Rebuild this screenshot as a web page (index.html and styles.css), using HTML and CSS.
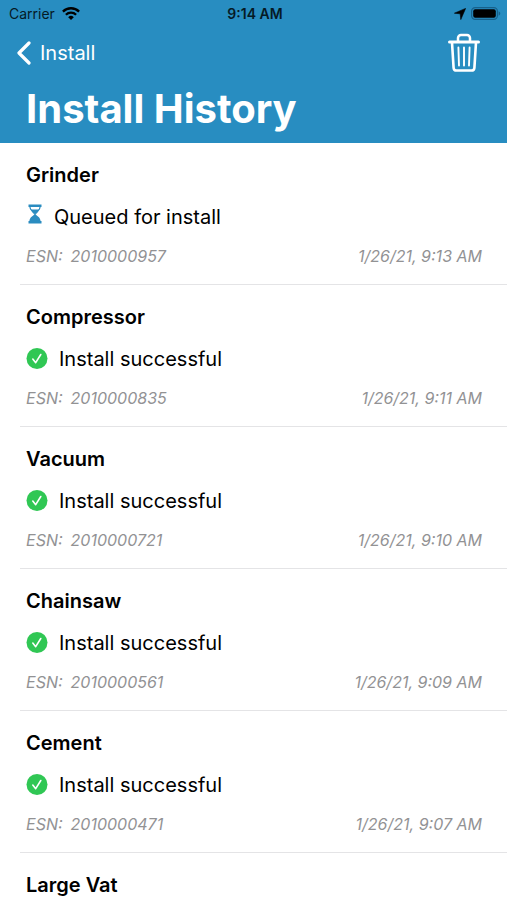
FILE: index.html
```html
<!DOCTYPE html>
<html lang="en">
<head>
<meta charset="utf-8">
<meta name="viewport" content="width=device-width, initial-scale=1">
<title>Install History</title>
<link rel="stylesheet" href="styles.css">
</head>
<body>
<svg class="defs" aria-hidden="true">
  <symbol id="check" viewBox="0 0 22 22">
    <circle cx="11" cy="10.500" r="10.500" fill="#30c754"/>
    <path d="M6.800 11.100l2.900 3.600 5.100-8.200" fill="none" stroke="#fff" stroke-width="1.600" stroke-linecap="round" stroke-linejoin="round"/>
  </symbol>
</svg>
<div class="app">
  <header class="header">
    <div class="status-bar">
      <div class="carrier">
        <span>Carrier</span>
        <svg class="wifi" viewBox="0 0 18 14" aria-hidden="true">
          <g fill="none" stroke="currentColor" stroke-width="2.300">
            <path d="M.9 4.600a11.500 11.500 0 0 1 16.200 0"/>
            <path d="M3.900 7.800a7.200 7.200 0 0 1 10.200 0"/>
          </g>
          <path d="M9 13.100L6.200 10.200a4 4 0 0 1 5.600 0z" fill="currentColor"/>
        </svg>
      </div>
      <span class="clock">9:14 AM</span>
      <div class="indicators">
        <svg class="location" viewBox="0 0 12 12" aria-hidden="true"><path d="M11.600.4L6.800 11.600 6.200 5.800.4 5.200z" fill="currentColor" stroke="currentColor" stroke-width=".6" stroke-linejoin="round"/></svg>
        <svg class="battery" viewBox="0 0 30 14" aria-hidden="true">
          <rect x=".6" y=".6" width="25.800" height="11.800" rx="3.600" fill="none" stroke="#17618b" stroke-width="1.200"/>
          <rect x="2.200" y="2.200" width="22.600" height="8.600" rx="2" fill="#000"/>
          <path d="M27.600 4.300c2.200.9 2.200 3.500 0 4.400z" fill="#17618b"/>
        </svg>
      </div>
    </div>
    <nav class="nav">
      <a class="back" href="#">
        <svg class="chevron" viewBox="0 0 16 24" aria-hidden="true"><path d="M13 2L3 12l10 10" fill="none" stroke="currentColor" stroke-width="3.200" stroke-linecap="round" stroke-linejoin="round"/></svg>
        <span>Install</span>
      </a>
      <button class="trash" type="button" aria-label="Clear history">
        <svg viewBox="0 0 34 40" aria-hidden="true">
          <g fill="none" stroke="currentColor" stroke-linecap="round" stroke-linejoin="round">
            <path d="M2.500 9h29" stroke-width="3"/>
            <path d="M11 8.500V5a3 3 0 0 1 3-3h6a3 3 0 0 1 3 3v3.500" stroke-width="2.500"/>
            <path d="M5 9.500l1.600 25.300a3 3 0 0 0 3 2.700h14.800a3 3 0 0 0 3-2.700L29 9.500" stroke-width="2.600"/>
            <path d="M11.400 14.500l.6 18M17 14.500v18M22.600 14.500l-.6 18" stroke-width="1.900"/>
          </g>
        </svg>
      </button>
    </nav>
    <h1 class="title">Install History</h1>
  </header>
  <main class="list">
    <article class="item">
      <h2 class="name">Grinder</h2>
      <p class="state queued">
        <svg class="hourglass" viewBox="0 0 14 20" aria-hidden="true">
          <g fill="#2a8cc0">
            <path d="M.5.500h13v2.500H.5zM.5 17h13v2.500H.5z"/>
            <path d="M2.500 5.500h9L7 9.800z"/>
            <path d="M7 9.500c1.500 2.400 5.600 3.500 5.600 8H1.400c0-4.500 4.100-5.600 5.600-8z"/>
          </g>
          <path d="M1.800 2.500C1.800 6.500 5.200 7.800 6.600 10M12.200 2.500c0 4-3.400 5.300-4.800 7.500" fill="none" stroke="#2a8cc0" stroke-width="1.200"/>
        </svg>
        <span>Queued for install</span>
      </p>
      <div class="meta"><span class="esn"><span>ESN:</span><span>2010000957</span></span><time>1/26/21, 9:13 AM</time></div>
    </article>
    <article class="item">
      <h2 class="name">Compressor</h2>
      <p class="state"><svg class="check" aria-hidden="true"><use href="#check"/></svg><span>Install successful</span></p>
      <div class="meta"><span class="esn"><span>ESN:</span><span>2010000835</span></span><time>1/26/21, 9:11 AM</time></div>
    </article>
    <article class="item">
      <h2 class="name">Vacuum</h2>
      <p class="state"><svg class="check" aria-hidden="true"><use href="#check"/></svg><span>Install successful</span></p>
      <div class="meta"><span class="esn"><span>ESN:</span><span>2010000721</span></span><time>1/26/21, 9:10 AM</time></div>
    </article>
    <article class="item">
      <h2 class="name">Chainsaw</h2>
      <p class="state"><svg class="check" aria-hidden="true"><use href="#check"/></svg><span>Install successful</span></p>
      <div class="meta"><span class="esn"><span>ESN:</span><span>2010000561</span></span><time>1/26/21, 9:09 AM</time></div>
    </article>
    <article class="item">
      <h2 class="name">Cement</h2>
      <p class="state"><svg class="check" aria-hidden="true"><use href="#check"/></svg><span>Install successful</span></p>
      <div class="meta"><span class="esn"><span>ESN:</span><span>2010000471</span></span><time>1/26/21, 9:07 AM</time></div>
    </article>
    <article class="item">
      <h2 class="name">Large Vat</h2>
    </article>
  </main>
</div>
</body>
</html>
```
FILE: styles.css
```css
* { box-sizing: border-box; }

body {
  margin: 0;
  background: #fff;
  color: #000;
  font-family: Inter, "Liberation Sans", sans-serif;
}

h1, h2, p { margin: 0; }

.defs { display: none; }

.app {
  display: flex;
  flex-direction: column;
  height: 100vh;
  overflow: hidden;
}

.header {
  flex: none;
  background: #288dc1;
  padding-bottom: 4px;
}

.status-bar {
  display: grid;
  grid-template-columns: 1fr auto 1fr;
  align-items: center;
  height: 27px;
  padding: 0 6px 0 9px;
  font-size: 14px;
  color: #051a26;
}

.carrier {
  display: flex;
  align-items: center;
  gap: 7px;
}

.wifi { width: 18px; height: 14px; color: #000; }

.clock { font-weight: 600; }

.indicators {
  display: flex;
  justify-content: flex-end;
  align-items: center;
  gap: 5px;
  color: #000;
}

.location { width: 12px; height: 12px; }
.battery { width: 30px; height: 14px; }

.nav {
  display: flex;
  justify-content: space-between;
  align-items: center;
  height: 52px;
  padding: 0 26px 0 16px;
}

.back {
  display: flex;
  align-items: center;
  gap: 8px;
  color: #fff;
  font-size: 20px;
  text-decoration: none;
}

.chevron { width: 16px; height: 24px; }

.trash {
  display: block;
  width: 34px;
  height: 40px;
  padding: 0;
  border: 0;
  background: none;
  color: #fff;
}

.trash svg { display: block; width: 100%; height: 100%; }

.title {
  padding-left: 26px;
  color: #fff;
  font-size: 40px;
  line-height: 60px;
  font-weight: 700;
}

.list {
  flex: 1;
  min-height: 0;
  overflow: hidden;
  padding-left: 20px;
}

.item {
  padding: 20px 25px 18px 6px;
  border-bottom: 1px solid #e4e4e6;
}

.name {
  font-size: 20px;
  line-height: 24px;
  font-weight: 600;
}

.state {
  display: flex;
  align-items: center;
  gap: 11px;
  margin-top: 16px;
  font-size: 20px;
  line-height: 28px;
}

.check { width: 22px; height: 22px; }
.hourglass { width: 14px; height: 20px; }

.queued {
  align-items: baseline;
  gap: 12px;
  padding-left: 2px;
}

.meta {
  display: flex;
  justify-content: space-between;
  margin-top: 15px;
  color: #929294;
  font-size: 16px;
  line-height: 20px;
  font-style: italic;
}

.esn { display: flex; gap: 8px; }
```
